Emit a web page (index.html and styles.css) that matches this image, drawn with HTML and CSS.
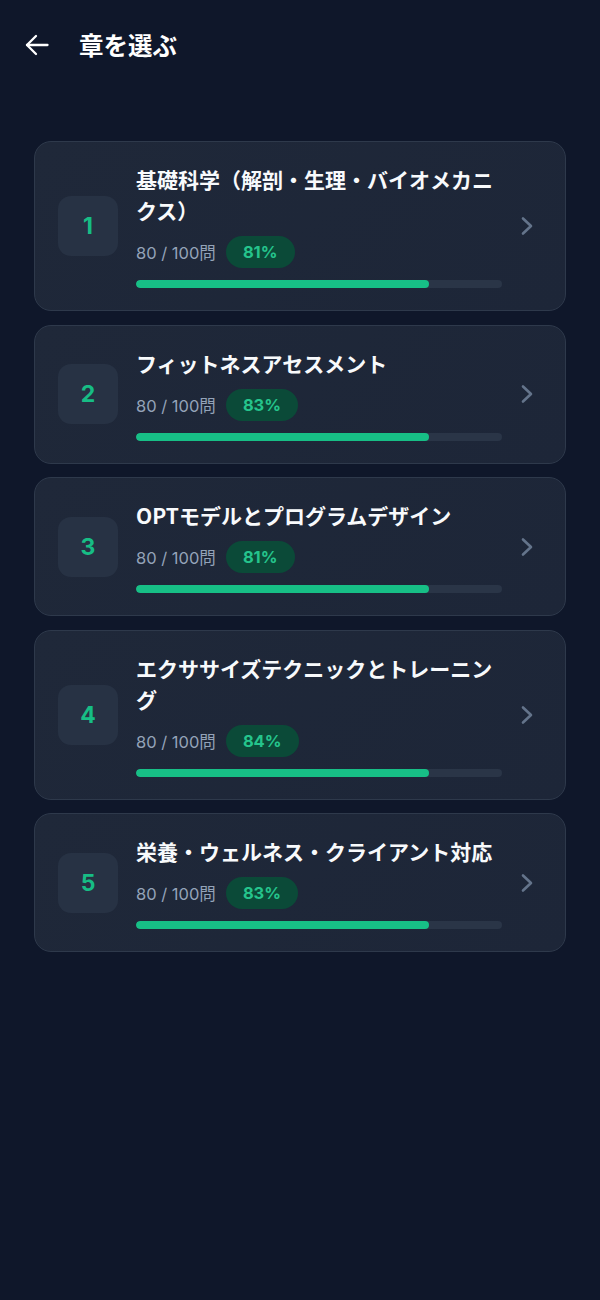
FILE: index.html
```html
<!DOCTYPE html>
<html lang="ja">
<head>
<meta charset="utf-8">
<title>章を選ぶ</title>
<link rel="stylesheet" href="styles.css">
</head>
<body>
<div class="page">
  <header class="header">
    <svg class="back" width="24" height="22" viewBox="0 0 24 22" fill="none" stroke="#ffffff" stroke-width="2.3" stroke-linecap="round" stroke-linejoin="round"><path d="M22.5 11H2"/><path d="M11 2L2 11l9 9"/></svg>
    <h1 class="title">章を選ぶ</h1>
  </header>
  <main class="list">
    <div class="card">
      <div class="num">1</div>
      <div class="body">
        <div class="name">基礎科学（解剖・生理・バイオメカニクス）</div>
        <div class="stats"><span class="count">80 / 100問</span><span class="badge">81%</span></div>
        <div class="track"><div class="fill" style="width:80%"></div></div>
      </div>
      <svg class="chev" width="14" height="20" viewBox="0 0 14 20" fill="none" stroke="#64748b" stroke-width="2.6" stroke-linecap="round" stroke-linejoin="round"><path d="M3 2.5l8 7.5-8 7.5"/></svg>
    </div>
    <div class="card">
      <div class="num">2</div>
      <div class="body">
        <div class="name">フィットネスアセスメント</div>
        <div class="stats"><span class="count">80 / 100問</span><span class="badge">83%</span></div>
        <div class="track"><div class="fill" style="width:80%"></div></div>
      </div>
      <svg class="chev" width="14" height="20" viewBox="0 0 14 20" fill="none" stroke="#64748b" stroke-width="2.6" stroke-linecap="round" stroke-linejoin="round"><path d="M3 2.5l8 7.5-8 7.5"/></svg>
    </div>
    <div class="card">
      <div class="num">3</div>
      <div class="body">
        <div class="name">OPTモデルとプログラムデザイン</div>
        <div class="stats"><span class="count">80 / 100問</span><span class="badge">81%</span></div>
        <div class="track"><div class="fill" style="width:80%"></div></div>
      </div>
      <svg class="chev" width="14" height="20" viewBox="0 0 14 20" fill="none" stroke="#64748b" stroke-width="2.6" stroke-linecap="round" stroke-linejoin="round"><path d="M3 2.5l8 7.5-8 7.5"/></svg>
    </div>
    <div class="card">
      <div class="num">4</div>
      <div class="body">
        <div class="name">エクササイズテクニックとトレーニング</div>
        <div class="stats"><span class="count">80 / 100問</span><span class="badge">84%</span></div>
        <div class="track"><div class="fill" style="width:80%"></div></div>
      </div>
      <svg class="chev" width="14" height="20" viewBox="0 0 14 20" fill="none" stroke="#64748b" stroke-width="2.6" stroke-linecap="round" stroke-linejoin="round"><path d="M3 2.5l8 7.5-8 7.5"/></svg>
    </div>
    <div class="card">
      <div class="num">5</div>
      <div class="body">
        <div class="name">栄養・ウェルネス・クライアント対応</div>
        <div class="stats"><span class="count">80 / 100問</span><span class="badge">83%</span></div>
        <div class="track"><div class="fill" style="width:80%"></div></div>
      </div>
      <svg class="chev" width="14" height="20" viewBox="0 0 14 20" fill="none" stroke="#64748b" stroke-width="2.6" stroke-linecap="round" stroke-linejoin="round"><path d="M3 2.5l8 7.5-8 7.5"/></svg>
    </div>
  </main>
</div>
</body>
</html>
```

FILE: styles.css
```css
* { box-sizing: border-box; }
html, body {
  margin: 0;
  padding: 0;
  background: #0f172a;
}
body {
  font-family: Inter, "Noto Sans CJK JP", sans-serif;
  color: #f8fafc;
  min-height: 1300px;
}
.page {
  width: 600px;
  min-height: 1300px;
  background: #0f172a;
}
.header {
  height: 90px;
  display: flex;
  align-items: center;
  padding-left: 25px;
  gap: 30px;
}
.back { display: block; flex: none; }
.title {
  margin: 0;
  font-family: "Noto Sans CJK JP", sans-serif;
  font-size: 24.5px;
  font-weight: 700;
  line-height: 30px;
  color: #ffffff;
}
.list {
  margin-top: 51px;
  padding: 0 34px;
  display: flex;
  flex-direction: column;
  gap: 13.5px;
}
.card {
  display: flex;
  align-items: center;
  background: linear-gradient(135deg, #1f2839 0%, #1d2638 100%);
  border: 1px solid #2e394b;
  border-radius: 17px;
  padding: 22px 31px 22px 23px;
}
.num {
  flex: none;
  width: 60px;
  height: 60px;
  border-radius: 13px;
  background: #273244;
  color: #17bd85;
  font-size: 23px;
  font-weight: 700;
  display: flex;
  align-items: center;
  justify-content: center;
}
.body {
  flex: 1;
  min-width: 0;
  margin-left: 18px;
  margin-right: 18px;
}
.name {
  font-family: "Noto Sans CJK JP", sans-serif;
  font-size: 21px;
  font-weight: 700;
  line-height: 31px;
  color: #f8fafc;
}
.stats {
  margin-top: 10px;
  display: flex;
  align-items: center;
  gap: 10px;
  height: 32px;
}
.count {
  font-size: 16.5px;
  color: #94a3b8;
}
.badge {
  height: 32px;
  padding: 0 17px;
  border-radius: 16px;
  background: #0b4a38;
  color: #25c48c;
  font-size: 16.5px;
  font-weight: 700;
  display: flex;
  align-items: center;
}
.track {
  margin-top: 12px;
  height: 8px;
  border-radius: 4px;
  background: #2a3547;
  overflow: hidden;
}
.fill {
  height: 100%;
  border-radius: 4px;
  background: #17bf86;
}
.chev { flex: none; display: block; }
```
